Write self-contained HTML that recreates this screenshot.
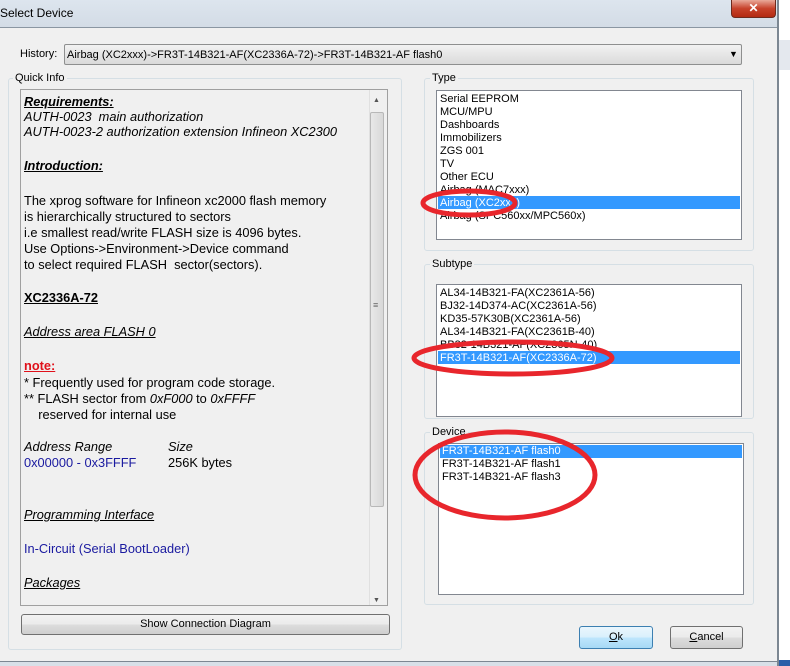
<!DOCTYPE html>
<html><head><meta charset="utf-8"><style>
*{margin:0;padding:0;box-sizing:border-box}
body{width:790px;height:666px;overflow:hidden;background:#f0f0f0;font-family:"Liberation Sans",Arial,sans-serif;font-size:12px;color:#000;position:relative}
.a{position:absolute}
.t{position:absolute;white-space:pre;line-height:14px;font-size:12.8px}
.grp{position:absolute;border:1px solid #d5dfe5;border-radius:3px}
.lbl{position:absolute;background:#f0f0f0;padding:0 2px;font-size:11px;line-height:12px}
.list{position:absolute;background:#fff;border:1px solid #828790}
.li{position:absolute;left:3px;font-size:11px;line-height:13px;white-space:pre}
.sel{position:absolute;background:#3399ff;height:13px}
.btn{position:absolute;border:1px solid #707070;border-radius:3px;background:linear-gradient(#f2f2f2,#ebebeb 50%,#dddddd 50%,#cfcfcf);text-align:center;font-size:11px;line-height:19px}
i{font-style:italic}
u{text-decoration:underline}
</style></head><body>
<div class="a" style="left:0;top:0;width:777px;height:28px;background:linear-gradient(#dde5ee,#d3dce6);border-bottom:1px solid #8a96a2"></div>
<div class="t" style="left:0;top:6px;font-size:12px">Select Device</div>
<div class="a" style="left:731px;top:0;width:45px;height:18px;background:linear-gradient(#e9a99a,#c7422b 50%,#b32a12);border:1px solid #6e2a1d;border-top:none;border-radius:0 0 4px 4px;color:#fff;text-align:center;font-weight:bold;font-size:12px;line-height:16px">✕</div>
<div class="a" style="left:777px;top:0;width:13px;height:666px;background:#fff"></div>
<div class="a" style="left:777px;top:0;width:2px;height:666px;background:#7c8792"></div>
<div class="a" style="left:779px;top:40px;width:11px;height:30px;background:#e4e8ee"></div>
<div class="a" style="left:779px;top:660px;width:11px;height:6px;background:#2a5ea8"></div>
<div class="a" style="left:0;top:661px;width:777px;height:5px;background:#d8e0e8;border-top:1px solid #7c8792"></div>

<div class="t" style="left:20px;top:47px;font-size:11px">History:</div>
<div class="a" style="left:64px;top:44px;width:678px;height:21px;border:1px solid #8e8f8f;border-radius:2px;background:linear-gradient(#f2f2f2,#e6e6e6 50%,#dadada)"></div>
<div class="t" style="left:67px;top:48px;font-size:11px">Airbag (XC2xxx)-&gt;FR3T-14B321-AF(XC2336A-72)-&gt;FR3T-14B321-AF flash0</div>
<div class="t" style="left:729px;top:47px;font-size:9px">▼</div>

<div class="grp" style="left:8px;top:78px;width:394px;height:572px"></div>
<div class="lbl" style="left:13px;top:72px">Quick Info</div>
<div class="a" style="left:20px;top:89px;width:368px;height:517px;border:1px solid #a0a0a0;background:#f0f0f0"></div>
<div class="a" style="left:369px;top:90px;width:18px;height:515px;background:#f0f0f0;border-left:1px solid #e0e0e0"></div>
<div class="a" style="left:370px;top:112px;width:14px;height:395px;background:linear-gradient(90deg,#e8e8e8,#d8d8d8);border:1px solid #b8b8b8;border-radius:2px"></div>
<div class="t" style="left:373px;top:94px;font-size:7px;color:#555">▲</div>
<div class="t" style="left:373px;top:594px;font-size:7px;color:#555">▼</div>
<div class="t" style="left:373px;top:298px;font-size:9px;color:#666">≡</div>

<div class="t" style="left:24px;top:95px;font-weight:bold;font-style:italic;text-decoration:underline">Requirements:</div>
<div class="t" style="left:24px;top:110px;font-style:italic">AUTH-0023  main authorization</div>
<div class="t" style="left:24px;top:125px;font-style:italic">AUTH-0023-2 authorization extension Infineon XC2300</div>
<div class="t" style="left:24px;top:159px;font-weight:bold;font-style:italic;text-decoration:underline">Introduction:</div>
<div class="t" style="left:24px;top:193px;line-height:16px">The xprog software for Infineon xc2000 flash memory
is hierarchically structured to sectors
i.e smallest read/write FLASH size is 4096 bytes.
Use Options-&gt;Environment-&gt;Device command
to select required FLASH  sector(sectors).</div>
<div class="t" style="left:24px;top:291px;font-weight:bold;text-decoration:underline">XC2336A-72</div>
<div class="t" style="left:24px;top:325px;font-style:italic;text-decoration:underline">Address area FLASH 0</div>
<div class="t" style="left:24px;top:359px;font-weight:bold;text-decoration:underline;color:#e0101a">note:</div>
<div class="t" style="left:24px;top:375px;line-height:16px">* Frequently used for program code storage.
** FLASH sector from <i>0xF000</i> to <i>0xFFFF</i>
    reserved for internal use</div>
<div class="t" style="left:24px;top:440px;font-style:italic">Address Range</div>
<div class="t" style="left:168px;top:440px;font-style:italic">Size</div>
<div class="t" style="left:24px;top:456px;color:#1a1aa0">0x00000 - 0x3FFFF</div>
<div class="t" style="left:168px;top:456px">256K bytes</div>
<div class="t" style="left:24px;top:508px;font-style:italic;text-decoration:underline">Programming Interface</div>
<div class="t" style="left:24px;top:542px;color:#1a1aa0">In-Circuit (Serial BootLoader)</div>
<div class="t" style="left:24px;top:576px;font-style:italic;text-decoration:underline">Packages</div>

<div class="btn" style="left:21px;top:614px;width:369px;height:21px">Show Connection Diagram</div>

<div class="grp" style="left:424px;top:78px;width:330px;height:173px"></div>
<div class="lbl" style="left:430px;top:72px">Type</div>
<div class="list" style="left:436px;top:90px;width:306px;height:150px">
<div class="sel" style="left:1px;top:105px;width:302px"></div>
<div class="li" style="top:2px">Serial EEPROM</div>
<div class="li" style="top:15px">MCU/MPU</div>
<div class="li" style="top:28px">Dashboards</div>
<div class="li" style="top:41px">Immobilizers</div>
<div class="li" style="top:54px">ZGS 001</div>
<div class="li" style="top:67px">TV</div>
<div class="li" style="top:80px">Other ECU</div>
<div class="li" style="top:93px">Airbag (MAC7xxx)</div>
<div class="li" style="top:106px;color:#fff">Airbag (XC2xxx)</div>
<div class="li" style="top:119px">Airbag (SPC560xx/MPC560x)</div>
</div>

<div class="grp" style="left:424px;top:264px;width:330px;height:155px"></div>
<div class="lbl" style="left:430px;top:258px">Subtype</div>
<div class="list" style="left:436px;top:284px;width:306px;height:133px">
<div class="sel" style="left:1px;top:66px;width:302px"></div>
<div class="li" style="top:2px">AL34-14B321-FA(XC2361A-56)</div>
<div class="li" style="top:15px">BJ32-14D374-AC(XC2361A-56)</div>
<div class="li" style="top:28px">KD35-57K30B(XC2361A-56)</div>
<div class="li" style="top:41px">AL34-14B321-FA(XC2361B-40)</div>
<div class="li" style="top:54px">BB32-14B321-AF(XC2365N-40)</div>
<div class="li" style="top:67px;color:#fff">FR3T-14B321-AF(XC2336A-72)</div>
</div>

<div class="grp" style="left:424px;top:432px;width:330px;height:173px"></div>
<div class="lbl" style="left:430px;top:426px">Device</div>
<div class="list" style="left:438px;top:443px;width:306px;height:152px">
<div class="sel" style="left:1px;top:1px;width:302px"></div>
<div class="li" style="top:1px;color:#fff">FR3T-14B321-AF flash0</div>
<div class="li" style="top:14px">FR3T-14B321-AF flash1</div>
<div class="li" style="top:27px">FR3T-14B321-AF flash3</div>
</div>

<div class="btn" style="left:579px;top:626px;width:74px;height:23px;border-color:#3c7fb1;background:linear-gradient(#eaf6fd,#d9f0fc 50%,#bee6fd 50%,#a7d9f5);line-height:21px"><u>O</u>k</div>
<div class="btn" style="left:670px;top:626px;width:73px;height:23px;line-height:21px"><u>C</u>ancel</div>

<svg class="a" style="left:0;top:0" width="790" height="666">
<g fill="none" stroke="#e8262c" stroke-width="5">
<ellipse cx="469" cy="203" rx="46" ry="12"/>
<ellipse cx="513" cy="358" rx="99" ry="16"/>
<ellipse cx="505" cy="475" rx="90" ry="43"/>
</g></svg>
</body></html>
